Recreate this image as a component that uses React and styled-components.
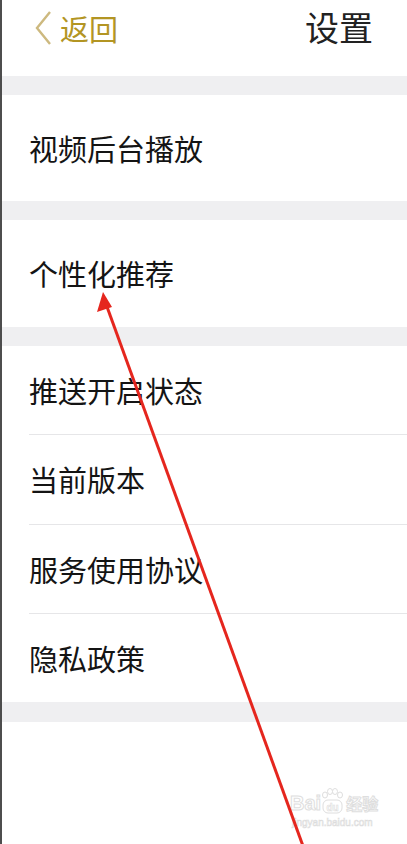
import React from 'react';
import styled, { createGlobalStyle } from 'styled-components';

const Global = createGlobalStyle`
  html, body { margin: 0; padding: 0; background: #fff; }
  body { font-family: "Noto Sans CJK SC", "Noto Sans", sans-serif; }
`;

const Page = styled.div`
  position: relative;
  width: 407px;
  height: 844px;
  box-sizing: border-box;
  border-left: 2px solid #4d4d4d;
  background: #fff;
  display: flex;
  flex-direction: column;
  overflow: hidden;
`;

const Header = styled.div`
  height: 76px;
  display: flex;
  align-items: flex-start;
  justify-content: space-between;
  padding: 10px 34px 0 32px;
  box-sizing: border-box;
`;

const Back = styled.div`
  display: flex;
  align-items: center;
  gap: 8px;
  color: #b39523;
  font-size: 29px;
  line-height: 34px;
`;

const Title = styled.div`
  color: #222;
  font-size: 34px;
  line-height: 34px;
`;

const Band = styled.div`
  height: ${({ h }) => h || 19}px;
  background: #efeff1;
  flex-shrink: 0;
`;

const Group = styled.div`
  display: flex;
  flex-direction: column;
`;

const Row = styled.div`
  height: ${({ h }) => h}px;
  display: flex;
  align-items: center;
  margin-left: 27px;
  box-sizing: border-box;
  border-top: ${({ line }) => (line ? '1px solid #e6e6e8' : 'none')};
  font-size: 29px;
  color: #141414;
  line-height: 1;
`;

const Overlay = styled.svg`
  position: absolute;
  left: -2px;
  top: 0;
  pointer-events: none;
`;

const Watermark = styled.div`
  position: absolute;
  left: 288px;
  top: 788px;
  white-space: nowrap;
  color: #fff;
  -webkit-text-stroke: 1px #dedede;
  font-family: "Liberation Sans", sans-serif;
  display: flex;
  flex-direction: column;
  align-items: flex-start;
  pointer-events: none;
`;

const MarkTop = styled.div`
  display: flex;
  align-items: flex-end;
  font-size: 20px;
  font-weight: 700;
  line-height: 22px;
`;

const MarkCn = styled.span`
  font-family: "Noto Sans CJK SC", sans-serif;
  font-size: 16px;
  margin-left: 3px;
`;

const MarkUrl = styled.div`
  font-size: 10px;
  line-height: 12px;
  margin-top: 3px;
  margin-left: 2px;
  -webkit-text-stroke: 0.6px #dcdcdc;
`;

const groupRows = [
  { t: '推送开启状态', h: 88 },
  { t: '当前版本', h: 90 },
  { t: '服务使用协议', h: 89 },
  { t: '隐私政策', h: 89 },
];

export default function App() {
  return (
    <>
      <Global />
      <Page>
        <Header>
          <Back>
            <svg width="18" height="36" viewBox="0 0 18 36">
              <polyline points="16,2 3,18 16,34" fill="none" stroke="#cdb97f" strokeWidth="2.4" />
            </svg>
            <span>返回</span>
          </Back>
          <Title>设置</Title>
        </Header>
        <Band />
        <Group>
          <Row h={106}>视频后台播放</Row>
        </Group>
        <Band />
        <Group>
          <Row h={107}>个性化推荐</Row>
        </Group>
        <Band />
        <Group>
          {groupRows.map((r, i) => (
            <Row key={r.t} h={r.h} line={i > 0}>{r.t}</Row>
          ))}
        </Group>
        <Band h={20} />
        <Watermark>
          <MarkTop>
            Bai
            <svg width="22" height="26" viewBox="0 0 22 26">
              <g fill="#fff" stroke="#dedede" strokeWidth="1">
                <ellipse cx="4" cy="7" rx="2.5" ry="3" />
                <ellipse cx="9" cy="3.5" rx="2.5" ry="3" />
                <ellipse cx="14" cy="3.5" rx="2.5" ry="3" />
                <ellipse cx="19" cy="7" rx="2.5" ry="3" />
                <rect x="2" y="12" width="19" height="13" rx="5" />
              </g>
              <text x="11.5" y="23" fontSize="10" textAnchor="middle" fill="#fff" stroke="#dcdcdc" strokeWidth="0.6" fontFamily="Liberation Sans">du</text>
            </svg>
            <MarkCn>经验</MarkCn>
          </MarkTop>
          <MarkUrl>jingyan.baidu.com</MarkUrl>
        </Watermark>
        <Overlay width="409" height="844" viewBox="0 0 409 844">
          <line x1="303" y1="846" x2="106" y2="304" stroke="#e5261e" strokeWidth="3" />
          <polygon points="103,292 97,312 112,307" fill="#e5261e" />
        </Overlay>
      </Page>
    </>
  );
}
